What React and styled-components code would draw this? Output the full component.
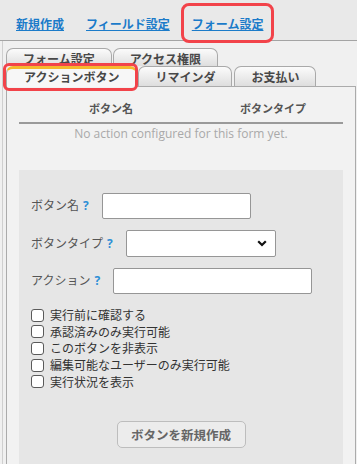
import React from 'react'
import styled, { createGlobalStyle, css } from 'styled-components'

const GlobalStyle = createGlobalStyle`
    body {
        margin: 0;
        background: #f0f0f0;
        font-family: "Open Sans", "Noto Sans CJK JP", sans-serif;
        font-size: 12px;
        color: #333;
    }
`

const Header = styled.div`
    height: 40px;
    display: flex;
    align-items: center;
    gap: 22px;
    padding-left: 16px;
    background: #e9e9e9;
    border-bottom: 1px solid #a4a4a4;
`

const marked = css`
    position: relative;
    &::after {
        content: "";
        position: absolute;
        border: 3px solid #f2434a;
        border-radius: 8px;
        pointer-events: none;
    }
`

const NavLink = styled.a`
    color: #1b7bc9;
    font-weight: 700;
    font-size: 12px;
    line-height: 18px;
    text-decoration: underline;
    margin-top: 9px;
    ${p => p.$marked && css`
        ${marked}
        &::after { top: -13px; bottom: -9px; left: -11px; right: -11px; }
    `}
`

const Body = styled.div`
    margin: 0 1px 0 2px;
    border-left: 1px solid #cfcfcf;
    padding: 7px 0 0 3px;
`

const TabRow = styled.div`
    display: flex;
    gap: 1px;
    position: relative;
`

const Tab = styled.div`
    box-sizing: border-box;
    height: ${p => p.$h}px;
    padding: 3px 16px 0;
    border: 1px solid #a9a9a9;
    border-bottom: none;
    border-radius: 7px 7px 0 0;
    background: linear-gradient(#fbfbfb, #dedede);
    font-weight: 700;
    font-size: 12px;
    line-height: 16px;
    color: #484848;
    white-space: nowrap;
    overflow: ${p => (p.$clip ? 'hidden' : 'visible')};
    ${p => p.$active && css`
        border-top: 3px solid #f5b82e;
        padding-top: 1px;
        padding-left: 17px;
        padding-right: 17px;
        background: #f7f7f7;
        margin-bottom: -1px;
        height: ${p.$h + 1}px;
        z-index: 1;
        ${marked}
        &::after { top: -6px; bottom: -4px; left: -4px; right: -2px; border-radius: 6px; }
    `}
`

const Panel = styled.div`
    border: 1px solid #ababab;
    border-bottom: none;
    background: #f2f2f2;
    padding: 0 12px;
    min-height: 380px;
`

const Table = styled.div`
    display: grid;
    grid-template-columns: 184px 1fr;
`

const HeadCell = styled.div`
    padding: 14px 0 6px;
    line-height: 15px;
    text-align: center;
    font-weight: 700;
    font-size: 11px;
    color: #555;
    border-bottom: 2px solid #9a9a9a;
`

const Empty = styled.div`
    grid-column: 1 / 3;
    text-align: center;
    line-height: 20px;
    color: #a9a9a9;
    font-size: 12px;
`

const FormBox = styled.div`
    margin-top: 26px;
    background: #e6e6e6;
    padding: 23px 12px 20px;
`

const FieldRow = styled.div`
    display: flex;
    align-items: center;
    gap: 13px;
    margin-bottom: 11px;
`

const Label = styled.span`
    color: #555;
    font-size: 12px;
    line-height: 18px;
    white-space: nowrap;
`

const Help = styled.span`
    color: #2d8fd6;
    font-weight: 700;
    margin-left: 4px;
`

const TextInput = styled.input`
    box-sizing: border-box;
    width: ${p => p.$w}px;
    height: 26px;
    border: 1px solid #969696;
    border-radius: 2px;
    background: #fff;
    margin: 0;
`

const SelectWrap = styled.div`
    position: relative;
    width: 150px;
    height: 27px;
    svg {
        position: absolute;
        right: 9px;
        top: 10px;
        pointer-events: none;
    }
`

const Select = styled.select`
    box-sizing: border-box;
    width: 100%;
    height: 100%;
    appearance: none;
    border: 1px solid #969696;
    border-radius: 2px;
    background: #fff;
    margin: 0;
`

const Checks = styled.div`
    margin-top: 13px;
    display: flex;
    flex-direction: column;
`

const CheckRow = styled.label`
    display: flex;
    align-items: center;
    gap: 6px;
    height: 16.6px;
    font-size: 12px;
    color: #333;
`

const Box = styled.span`
    box-sizing: border-box;
    width: 13px;
    height: 13px;
    border: 1px solid #5a5a5a;
    border-radius: 3px;
    background: #fff;
    flex: none;
`

const ButtonWrap = styled.div`
    display: flex;
    justify-content: center;
    margin-top: 31px;
`

const Button = styled.button`
    width: 129px;
    height: 27px;
    border: 1px solid #bdbdbd;
    border-radius: 5px;
    background: #ececec;
    color: #666;
    font-family: inherit;
    font-weight: 700;
    font-size: 12.5px;
    padding: 0;
`

const checks = [
    '実行前に確認する',
    '承認済みのみ実行可能',
    'このボタンを非表示',
    '編集可能なユーザーのみ実行可能',
    '実行状況を表示',
]

export default function App() {
    return (
        <>
            <GlobalStyle />
            <Header>
                <NavLink href="#">新規作成</NavLink>
                <NavLink href="#">フィールド設定</NavLink>
                <NavLink href="#" $marked>フォーム設定</NavLink>
            </Header>
            <Body>
                <TabRow>
                    <Tab $h={18} $clip>フォーム設定</Tab>
                    <Tab $h={18} $clip>アクセス権限</Tab>
                </TabRow>
                <TabRow>
                    <Tab $h={20} $active>アクションボタン</Tab>
                    <Tab $h={20}>リマインダ</Tab>
                    <Tab $h={20} style={{ marginLeft: 1 }}>お支払い</Tab>
                </TabRow>
                <Panel>
                    <Table>
                        <HeadCell>ボタン名</HeadCell>
                        <HeadCell>ボタンタイプ</HeadCell>
                        <Empty>No action configured for this form yet.</Empty>
                    </Table>
                    <FormBox>
                        <FieldRow>
                            <Label>ボタン名<Help>?</Help></Label>
                            <TextInput $w={149} />
                        </FieldRow>
                        <FieldRow>
                            <Label>ボタンタイプ<Help>?</Help></Label>
                            <SelectWrap>
                                <Select />
                                <svg width="10" height="7" viewBox="0 0 10 7">
                                    <path d="M1.2 1.2 L5 5 L8.8 1.2" fill="none" stroke="#111" strokeWidth="2.2" />
                                </svg>
                            </SelectWrap>
                        </FieldRow>
                        <FieldRow>
                            <Label>アクション<Help>?</Help></Label>
                            <TextInput $w={199} />
                        </FieldRow>
                        <Checks>
                            {checks.map(c => (
                                <CheckRow key={c}><Box />{c}</CheckRow>
                            ))}
                        </Checks>
                        <ButtonWrap>
                            <Button>ボタンを新規作成</Button>
                        </ButtonWrap>
                    </FormBox>
                </Panel>
            </Body>
        </>
    )
}
